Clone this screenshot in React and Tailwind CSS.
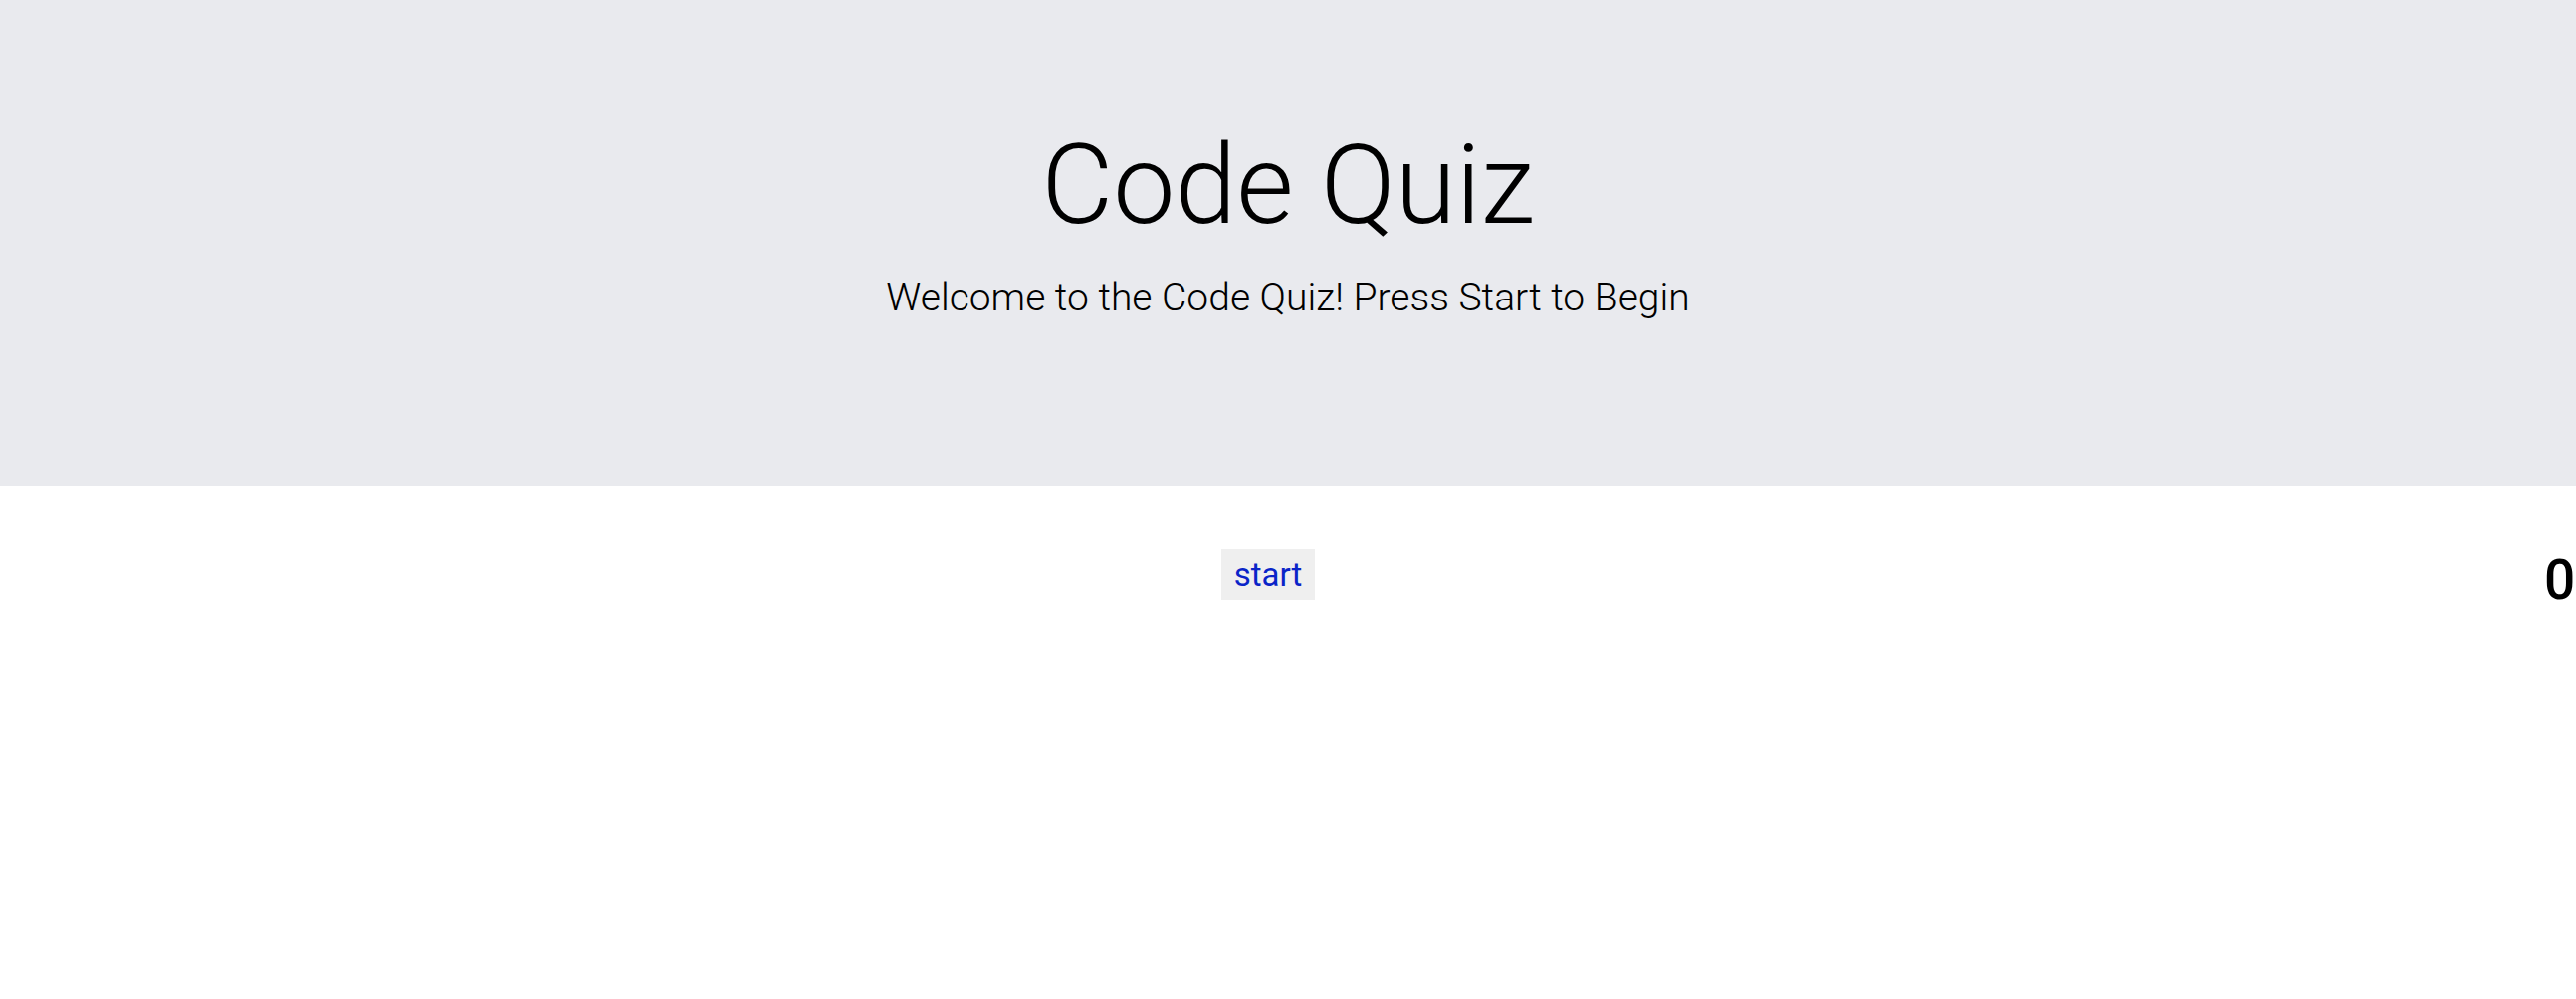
import React from 'react';

function App() {
  return (
    <div className="min-h-screen bg-white text-black font-['Roboto','Liberation_Sans',sans-serif]">
      {/* jumbotron */}
      <header className="h-[488px] bg-[#e9eaee] flex flex-col items-center pt-[119px]">
        <h1 className="text-[111px] leading-[134px] font-light">Code Quiz</h1>
        <p className="mt-[22px] text-[39px] leading-[48px] font-light">
          Welcome to the Code Quiz! Press Start to Begin
        </p>
      </header>

      <main className="flex items-start pt-[64px]">
        <div className="flex-1 flex justify-center">
          <button className="h-[51px] px-[13px] bg-[#efefef] text-[#0a24c8] text-[33px] leading-none">
            start
          </button>
        </div>
        <div className="w-[40px] pl-[8px] pt-[4px] text-[55px] leading-none font-medium">
          0
        </div>
      </main>
    </div>
  );
}

export default App;
